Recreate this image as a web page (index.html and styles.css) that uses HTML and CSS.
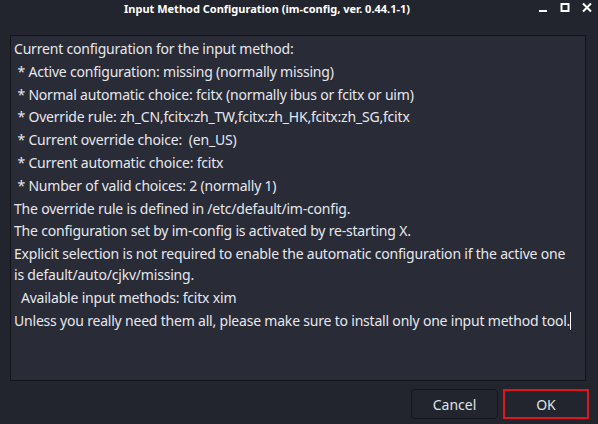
FILE: index.html
```html
<!DOCTYPE html>
<html>
<head>
<meta charset="utf-8">
<link rel="stylesheet" href="styles.css">
</head>
<body>
<div class="window">
  <div class="titlebar">
    <div class="title">Input Method Configuration (im-config, ver. 0.44.1-1)</div>
    <div class="controls">
      <svg class="ctl" width="12" height="12" viewBox="0 0 12 12"><rect x="2" y="8" width="8" height="2" fill="#ffffff"/></svg>
      <svg class="ctl" width="12" height="12" viewBox="0 0 12 12"><rect x="2.5" y="2" width="7" height="7" fill="none" stroke="#ffffff" stroke-width="2"/></svg>
      <svg class="ctl" width="12" height="12" viewBox="0 0 12 12"><path d="M2 1.5 L10 9.5 M10 1.5 L2 9.5" stroke="#ffffff" stroke-width="2"/></svg>
    </div>
  </div>
  <div class="content">
    <div class="textview">
      <p>Current configuration for the input method:</p>
      <p>&nbsp;* Active configuration: missing (normally missing)</p>
      <p>&nbsp;* Normal automatic choice: fcitx (normally ibus or fcitx or uim)</p>
      <p>&nbsp;* Override rule: zh_CN,fcitx:zh_TW,fcitx:zh_HK,fcitx:zh_SG,fcitx</p>
      <p>&nbsp;* Current override choice: &nbsp;(en_US)</p>
      <p>&nbsp;* Current automatic choice: fcitx</p>
      <p>&nbsp;* Number of valid choices: 2 (normally 1)</p>
      <p>The override rule is defined in /etc/default/im-config.</p>
      <p>The configuration set by im-config is activated by re-starting X.</p>
      <p>Explicit selection is not required to enable the automatic configuration if the active one is default/auto/cjkv/missing.</p>
      <p>&nbsp; Available input methods: fcitx xim</p>
      <p>Unless you really need them all, please make sure to install only one input method tool.<span class="caret"></span></p>
    </div>
    <div class="buttons">
      <button class="btn">Cancel</button>
      <button class="btn ok">OK</button>
    </div>
  </div>
</div>
</body>
</html>
```
FILE: styles.css
```css
html, body {
  margin: 0;
  padding: 0;
  background: #23252e;
}
.window {
  width: 598px;
  height: 424px;
  background: #23252e;
  display: flex;
  flex-direction: column;
  font-family: "Noto Sans", "Open Sans", sans-serif;
  color: #e3e6ec;
  overflow: hidden;
}
.titlebar {
  height: 35px;
  position: relative;
  display: flex;
  justify-content: center;
  padding-right: 64px;
}
.title {
  font-weight: bold;
  font-size: 11px;
  line-height: 18px;
  color: #ffffff;
}
.controls {
  position: absolute;
  right: 5px;
  top: 2px;
  display: flex;
  gap: 10px;
}
.ctl {
  display: block;
}
.content {
  padding: 0 12px 0 10px;
  display: flex;
  flex-direction: column;
}
.textview {
  height: 342px;
  background: #292b37;
  border: 1px solid #121419;
  padding: 2px 10px 0 3px;
  font-size: 14px;
  letter-spacing: -0.2px;
  color: #e6e8ee;
}
.textview p {
  margin: 0 0 1.8px 0;
  line-height: 21px;
}
.caret {
  display: inline-block;
  width: 1px;
  height: 18px;
  background: #ffffff;
  vertical-align: -4px;
}
.buttons {
  display: flex;
  justify-content: flex-end;
  gap: 5px;
  margin-top: 8px;
  margin-right: -3px;
}
.btn {
  width: 87px;
  height: 30px;
  background: #23252e;
  border: 1px solid #14161b;
  border-radius: 4px;
  color: #dfe2e8;
  font-family: "Noto Sans", "Open Sans", sans-serif;
  font-size: 14px;
}
.btn.ok {
  border: 2px solid #e0161f;
  border-radius: 0;
  width: 86px;
}
```
